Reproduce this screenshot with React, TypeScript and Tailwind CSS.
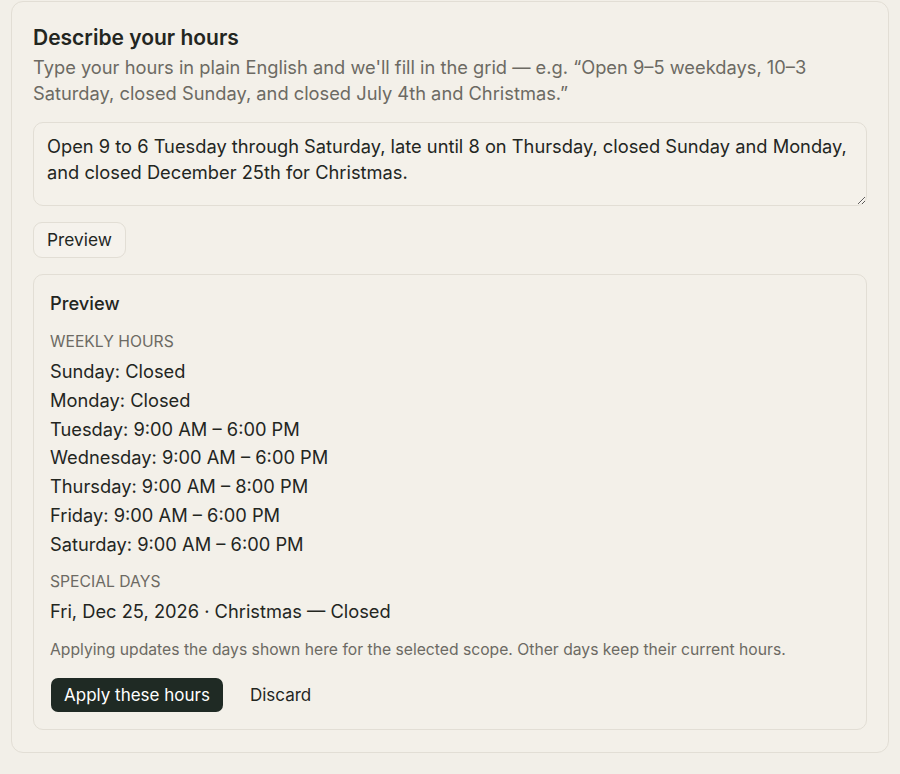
import React from "react";

export default function App() {
  const rows = [
    "Sunday: Closed",
    "Monday: Closed",
    "Tuesday: 9:00 AM – 6:00 PM",
    "Wednesday: 9:00 AM – 6:00 PM",
    "Thursday: 9:00 AM – 8:00 PM",
    "Friday: 9:00 AM – 6:00 PM",
    "Saturday: 9:00 AM – 6:00 PM",
  ];
  return (
    <div
      className="min-h-[774px] w-[900px] bg-[#f2efe8] pl-[11px] pr-[11px] pt-px text-[#23261f]"
      style={{ fontFamily: "Inter, 'Noto Sans', sans-serif" }}
    >
      <div className="w-[878px] rounded-[12px] border border-[#e2ded5] bg-[#f3f0e9] px-[21px] pb-[22px] pt-[22px]">
        <h2 className="text-[21px] font-semibold leading-[28px] text-[#23261f]">Describe your hours</h2>
        <p className="mt-[2px] text-[18.3px] leading-[26px] text-[#6c6a63]">
          Type your hours in plain English and we'll fill in the grid — e.g. “Open 9–5 weekdays, 10–3 Saturday, closed Sunday, and closed July 4th and Christmas.”
        </p>
        <textarea
          className="mt-4 block h-[84px] w-full resize-y rounded-[10px] border border-[#e2ded5] bg-[#f4f1ea] px-[13px] pt-[10px] text-[18.3px] leading-[26px] text-[#23261f] outline-none"
          defaultValue="Open 9 to 6 Tuesday through Saturday, late until 8 on Thursday, closed Sunday and Monday, and closed December 25th for Christmas."
        />
        <button className="mt-4 flex h-[36px] items-center rounded-[9px] border border-[#e2ded5] bg-[#f5f2ec] px-[13px] text-[17.3px] text-[#23261f]">
          Preview
        </button>
        <div className="mt-4 rounded-[10px] border border-[#e2ded5] bg-[#f3f0e9] px-4 pb-[17px] pt-[16px]">
          <div className="text-[18.3px] font-medium leading-[24px]">Preview</div>
          <div className="mt-4 text-[15.7px] uppercase leading-[22px] text-[#6c6a63]">Weekly hours</div>
          <div className="mt-1">
            {rows.map((r) => (
              <div key={r} className="text-[18.3px] leading-[28.8px]">
                {r}
              </div>
            ))}
          </div>
          <div className="mt-3 text-[15.7px] uppercase leading-[22px] text-[#6c6a63]">Special days</div>
          <div className="mt-1 text-[18.3px] leading-[28.8px]">Fri, Dec 25, 2026 · Christmas — Closed</div>
          <p className="mt-[14px] text-[15.7px] leading-[22px] text-[#6c6a63]">
            Applying updates the days shown here for the selected scope. Other days keep their current hours.
          </p>
          <div className="mt-[17px] flex items-center gap-[13px] pl-px">
            <button className="flex h-[34px] items-center rounded-[7px] bg-[#1f2a24] px-[13px] text-[17px] text-white">
              Apply these hours
            </button>
            <button className="flex h-[34px] items-center px-[14px] text-[17px] text-[#23261f]">Discard</button>
          </div>
        </div>
      </div>
    </div>
  );
}
